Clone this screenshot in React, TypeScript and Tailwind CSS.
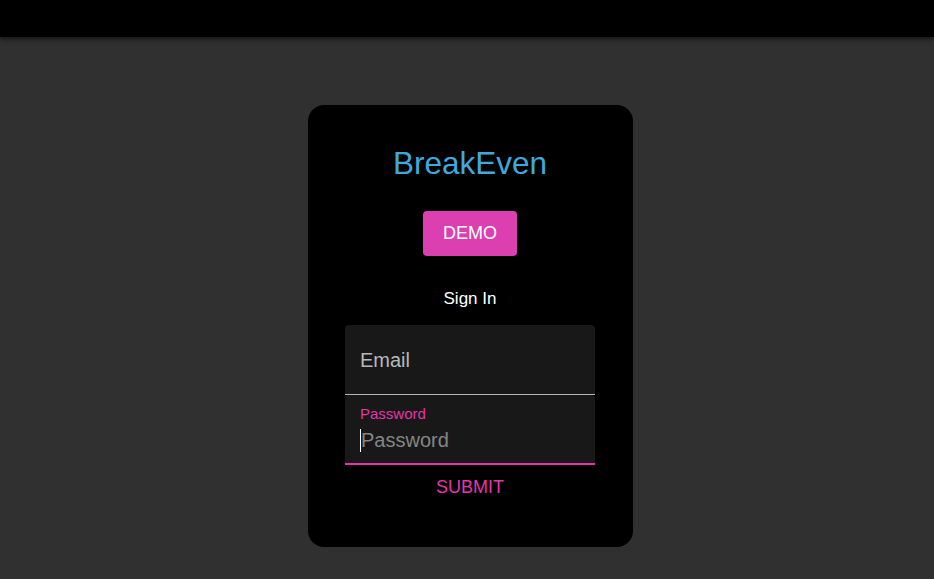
import React from 'react';

const font = { fontFamily: '"Liberation Sans", Arial, sans-serif' };

export default function App() {
  return (
    <div className="min-h-[579px] bg-[#303030]" style={font}>
      <header className="h-[37px] bg-black shadow-[0_2px_5px_rgba(0,0,0,0.6)]" />
      <main className="flex justify-center pt-[68px] pl-[7px]">
        <div className="w-[325px] rounded-[16px] bg-black pt-[40px] pb-[49px] pr-px flex flex-col items-center">
          <h1 className="text-[31.5px] leading-[36px] text-[#3fa9de]">BreakEven</h1>
          <button className="mt-[30px] h-[45px] w-[94px] rounded-[4px] bg-[#db3fb0] text-[18px] text-white">
            DEMO
          </button>
          <p className="mt-[33px] text-[17px] leading-[20px] text-white">Sign In</p>
          <form className="mt-[16px] w-[250px] flex flex-col">
            <div className="h-[70px] rounded-t-[4px] bg-[#181818] border-b border-[#b8b8b8] flex items-center px-[15px]">
              <span className="text-[20px] leading-[24px] text-[#b8b8b8]">Email</span>
            </div>
            <div className="h-[70px] rounded-t-[4px] bg-[#181818] border-b-2 border-[#e535ab] px-[15px] pt-[10px] flex flex-col">
              <span className="text-[15px] leading-[18px] text-[#e535ab]">Password</span>
              <div className="mt-[5px] flex items-center h-[24px]">
                <span className="w-px h-[23px] bg-white" />
                <span className="text-[20px] leading-[24px] text-[#858585]">Password</span>
              </div>
            </div>
          </form>
          <button className="mt-[11px] text-[18px] leading-[22px] text-[#e535ab]">SUBMIT</button>
        </div>
      </main>
    </div>
  );
}
